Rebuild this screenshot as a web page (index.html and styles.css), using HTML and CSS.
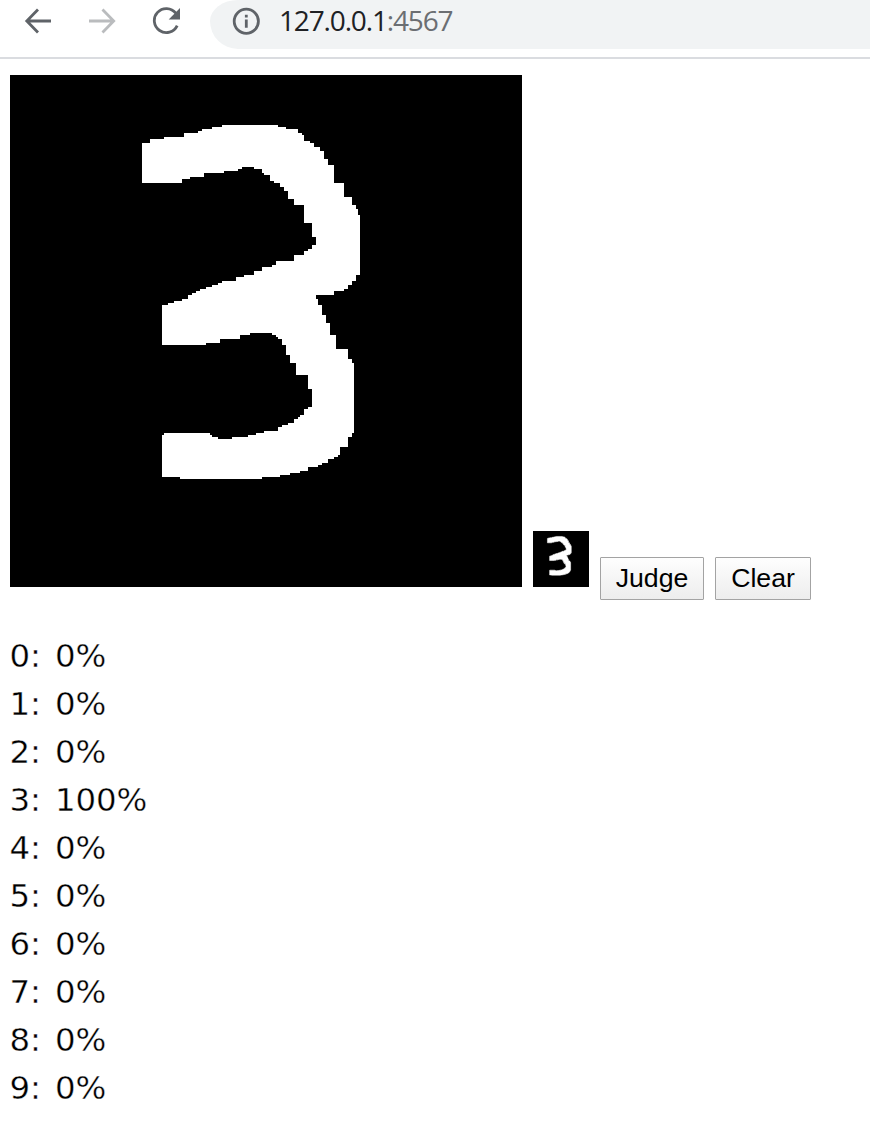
FILE: index.html
```html
<!DOCTYPE html>
<html lang="en">
<head>
<meta charset="utf-8">
<title>127.0.0.1:4567</title>
<link rel="stylesheet" href="styles.css">
</head>
<body>
<header class="toolbar">
  <svg class="nav" viewBox="0 0 28 28"><path d="M27 14H2.5M14 2.5L2.8 14L14 25.5"/></svg>
  <svg class="nav nav-disabled" viewBox="0 0 28 28"><path d="M1 14H26M14.5 2.5L25.7 14L14.5 25.5"/></svg>
  <svg class="nav" viewBox="0 0 28 28"><path d="M23.8 6.2A12 12 0 1 0 25.2 18.6"/><path class="solid" d="M28 1V12.4H16.7Z"/></svg>
  <div class="address">
    <svg class="info" viewBox="0 0 28 28"><circle cx="14.3" cy="14.3" r="12.1"/><path d="M14.3 12.6V20.8M14.3 7.8V10.6"/></svg>
    <span class="url">127.0.0.1<span class="port">:4567</span></span>
  </div>
</header>
<main>
  <div class="workspace">
    <svg class="canvas" viewBox="0 0 512 512">
      <path id="stroke" transform="translate(120 40) scale(.33333)" d="M36 84H60V72H102V66H162V54H204V48H216V42H246V36H276V30H444V36H468V42H504V54H516V60H522V78H540V84H552V96H570V108H582V132H594V150H612V204H642V246H666V270H678V282H684V300H690V480H678V498H666V510H654V522H642V528H612V540H558V552H564V570H576V600H588V624H600V660H618V702H654V732H666V744H672V954H666V966H654V996H630V1020H624V1026H612V1032H594V1044H576V1050H564V1056H534V1068H510V1074H480V1080H450V1086H396V1092H150V1086H96V960H102V954H240V960H246V966H264V972H306V966H354V960H378V954H402V948H444V936H456V930H474V924H492V912H504V906H510V900H522V882H534V876H546V822H534V780H498V744H480V720H468V690H456V672H444V666H438V660H426V654H360V660H330V672H270V684H228V690H96V570H114V564H132V558H156V552H174V540H186V534H198V528H210V522H228V516H246V510H264V504H276V498H318V486H342V480H372V468H396V456H426V450H438V438H492V420H522V408H534V402H546V390H558V366H546V324H522V270H492V252H474V228H462V216H450V204H432V198H420V180H402V174H396V162H372V156H336V162H324V168H282V174H222V186H180V192H156V204H36Z"/>
    </svg>
    <svg class="thumb" viewBox="0 0 512 512"><use href="#stroke" class="thumb-stroke"/></svg>
    <div class="buttons">
      <button class="btn judge">Judge</button>
      <button class="btn clear">Clear</button>
    </div>
  </div>
  <div class="results">
    <div>0: 0%</div>
    <div>1: 0%</div>
    <div>2: 0%</div>
    <div>3: 100%</div>
    <div>4: 0%</div>
    <div>5: 0%</div>
    <div>6: 0%</div>
    <div>7: 0%</div>
    <div>8: 0%</div>
    <div>9: 0%</div>
  </div>
</main>
</body>
</html>
```

FILE: styles.css
```css
* { box-sizing: border-box; }
body { margin: 0; background: #fff; color: #000; overflow: hidden; }
svg { display: block; flex: none; }

.toolbar {
  display: flex;
  align-items: flex-start;
  gap: 36px;
  height: 59px;
  padding-left: 24px;
  border-bottom: 2px solid #dadce0;
}
.nav {
  width: 28px;
  height: 28px;
  margin-top: 7px;
  fill: none;
  stroke: #5f6368;
  stroke-width: 2.8;
}
.nav-disabled { stroke: #babcbe; }
.nav .solid { fill: #5f6368; stroke: none; }

.address {
  display: flex;
  flex: 1;
  height: 49px;
  margin-left: -6px;
  padding-left: 22px;
  background: #f1f3f4;
  border-radius: 0 0 0 28px / 0 0 0 28px;
  border-top-left-radius: 28px 21px;
}
.info {
  width: 28px;
  height: 28px;
  margin: 7px 19px 0 0;
  fill: none;
  stroke: #5f6368;
  stroke-width: 2.8;
}
.url {
  font: 28px/40px "Open Sans", "Noto Sans", sans-serif;
  letter-spacing: -1.15px;
  color: #202124;
}
.port { color: #6b6e72; }

.workspace {
  display: flex;
  align-items: flex-end;
  height: 541px;
  padding: 16px 0 0 10px;
}
.canvas {
  width: 512px;
  height: 512px;
  margin: 0 11px 13px 0;
  background: #000;
  fill: #fff;
}
.thumb {
  width: 56px;
  height: 56px;
  margin: 0 11px 13px 0;
  background: #000;
  fill: #fff;
}
.thumb-stroke { stroke: #fff; stroke-width: 14; filter: blur(5px); }
.buttons { display: flex; gap: 11px; }
.btn {
  height: 43px;
  padding: 0;
  border: 1px solid #a3a3a3;
  border-radius: 1px;
  background: linear-gradient(#fefefe, #ededed);
  color: #000;
  font: 26.67px "Liberation Sans", Arial, sans-serif;
}
.judge { width: 104px; }
.clear { width: 96px; }

.results {
  padding: 32px 0 0 9px;
  font: 32.4px/48px "DejaVu Sans", Verdana, sans-serif;
  letter-spacing: -.1px;
  -webkit-text-stroke: .35px #fff;
}
.results div { padding-left: .5px; word-spacing: 4px; }
```
